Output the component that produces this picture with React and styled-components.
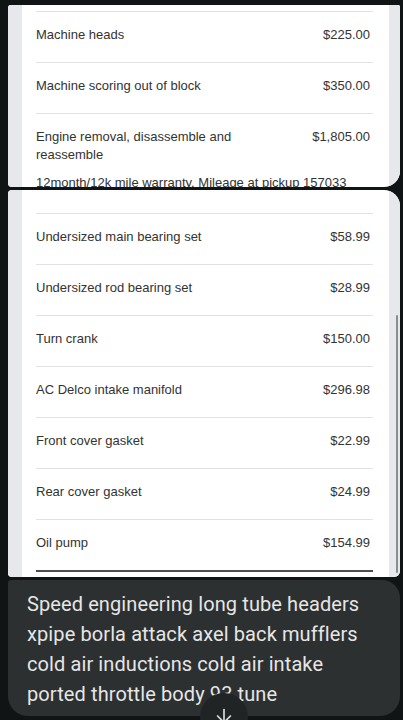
import React from 'react';
import styled, { createGlobalStyle } from 'styled-components';
import { ArrowDown } from 'lucide-react';

// Colors
const pageBg = '#101414';
const gutterColor = '#e7e8ec';
const lineColor = '#e2e2e2';
const textColor = '#333333';
const bubbleBg = '#2c3031';

const GlobalStyle = createGlobalStyle`
  html, body {
    margin: 0;
    padding: 0;
    background: ${pageBg};
    overflow: hidden;
  }
`;

const MyPage = styled.main`
  position: relative;
  display: flex;
  flex-direction: column;
  gap: 3px;
  width: 403px;
  height: 720px;
  box-sizing: border-box;
  padding: 5px 3px 0 8px;
  overflow: hidden;
`;

const MyCard = styled.section`
  display: flex;
  height: ${props => props.h}px;
  border-radius: ${props => props.radius};
  overflow: hidden;
  background-color: white;
  flex-shrink: 0;
`;

const MyGutter = styled.div`
  width: ${props => props.w}px;
  flex-shrink: 0;
  background-color: ${gutterColor};
`;

const MyRightGutter = styled.div`
  display: flex;
  justify-content: flex-end;
  width: 11px;
  flex-shrink: 0;
  box-sizing: border-box;
  padding: 125px 2px 0 0;
  background-color: ${gutterColor};
`;

const MyThumb = styled.div`
  width: 2px;
  height: 258px;
  border-radius: 1px;
  background-color: #8c8c8c;
`;

const MyList = styled.div`
  flex: 1;
  padding: ${props => props.top}px 16px 0 14px;
  font-family: 'Liberation Sans', Arial, sans-serif;
  font-size: 13px;
  line-height: 18px;
  color: ${textColor};
`;

const MyRow = styled.div`
  display: flex;
  justify-content: space-between;
  align-items: flex-start;
  gap: 24px;
  border-top: 1px solid ${lineColor};
  padding: 14px 3px ${props => props.bottom || 18}px 0;
`;

const MyLabel = styled.span`
  max-width: 200px;
`;

const MyPrice = styled.span`
  white-space: nowrap;
`;

const MyNote = styled.p`
  margin: 0;
  white-space: nowrap;
`;

const MyEndLine = styled.div`
  height: 2px;
  background-color: #4e4e4e;
`;

const MyBubble = styled.div`
  flex-shrink: 0;
  padding: 9px 30px 7px 19px;
  border-radius: 3px 18px 20px 20px;
  background-color: ${bubbleBg};
  color: #e6e6e6;
  font-family: Roboto, 'Noto Sans', sans-serif;
  font-size: 20px;
  letter-spacing: 0.1px;
  line-height: 30px;
`;

const MyScrollBtn = styled.button`
  position: absolute;
  left: 200px;
  top: 693px;
  width: 48px;
  height: 48px;
  display: flex;
  justify-content: center;
  padding-top: 12px;
  box-sizing: border-box;
  border: none;
  border-radius: 50%;
  background-color: #202425;
  color: #dedede;
  cursor: pointer;
`;

const topItems = [
  { name: 'Machine heads', price: '$225.00' },
  { name: 'Machine scoring out of block', price: '$350.00' },
];

const bottomItems = [
  { name: 'Undersized main bearing set', price: '$58.99' },
  { name: 'Undersized rod bearing set', price: '$28.99' },
  { name: 'Turn crank', price: '$150.00' },
  { name: 'AC Delco intake manifold', price: '$296.98' },
  { name: 'Front cover gasket', price: '$22.99' },
  { name: 'Rear cover gasket', price: '$24.99' },
  { name: 'Oil pump', price: '$154.99' },
];

export default function App() {
  return (
    <>
      <GlobalStyle />
      <MyPage>
        <MyCard h={182} radius="3px 2px 16px 4px">
          <MyGutter w={14} />
          <MyList top={6}>
            {topItems.map(item => (
              <MyRow key={item.name}>
                <MyLabel>{item.name}</MyLabel>
                <MyPrice>{item.price}</MyPrice>
              </MyRow>
            ))}
            <MyRow bottom={10}>
              <MyLabel>Engine removal, disassemble and reassemble</MyLabel>
              <MyPrice>$1,805.00</MyPrice>
            </MyRow>
            <MyNote>12month/12k mile warranty. Mileage at pickup 157033</MyNote>
          </MyList>
          <MyGutter w={11} />
        </MyCard>

        <MyCard h={387} radius="4px 16px 6px 4px">
          <MyGutter w={14} />
          <MyList top={23}>
            {bottomItems.map(item => (
              <MyRow key={item.name}>
                <MyLabel>{item.name}</MyLabel>
                <MyPrice>{item.price}</MyPrice>
              </MyRow>
            ))}
            <MyEndLine />
          </MyList>
          <MyRightGutter>
            <MyThumb />
          </MyRightGutter>
        </MyCard>

        <MyBubble>
          Speed engineering long tube headers xpipe borla attack axel back
          mufflers cold air inductions cold air intake ported throttle body 93
          tune
        </MyBubble>

        <MyScrollBtn type="button" aria-label="Scroll to bottom">
          <ArrowDown size={22} strokeWidth={1.8} />
        </MyScrollBtn>
      </MyPage>
    </>
  );
}
